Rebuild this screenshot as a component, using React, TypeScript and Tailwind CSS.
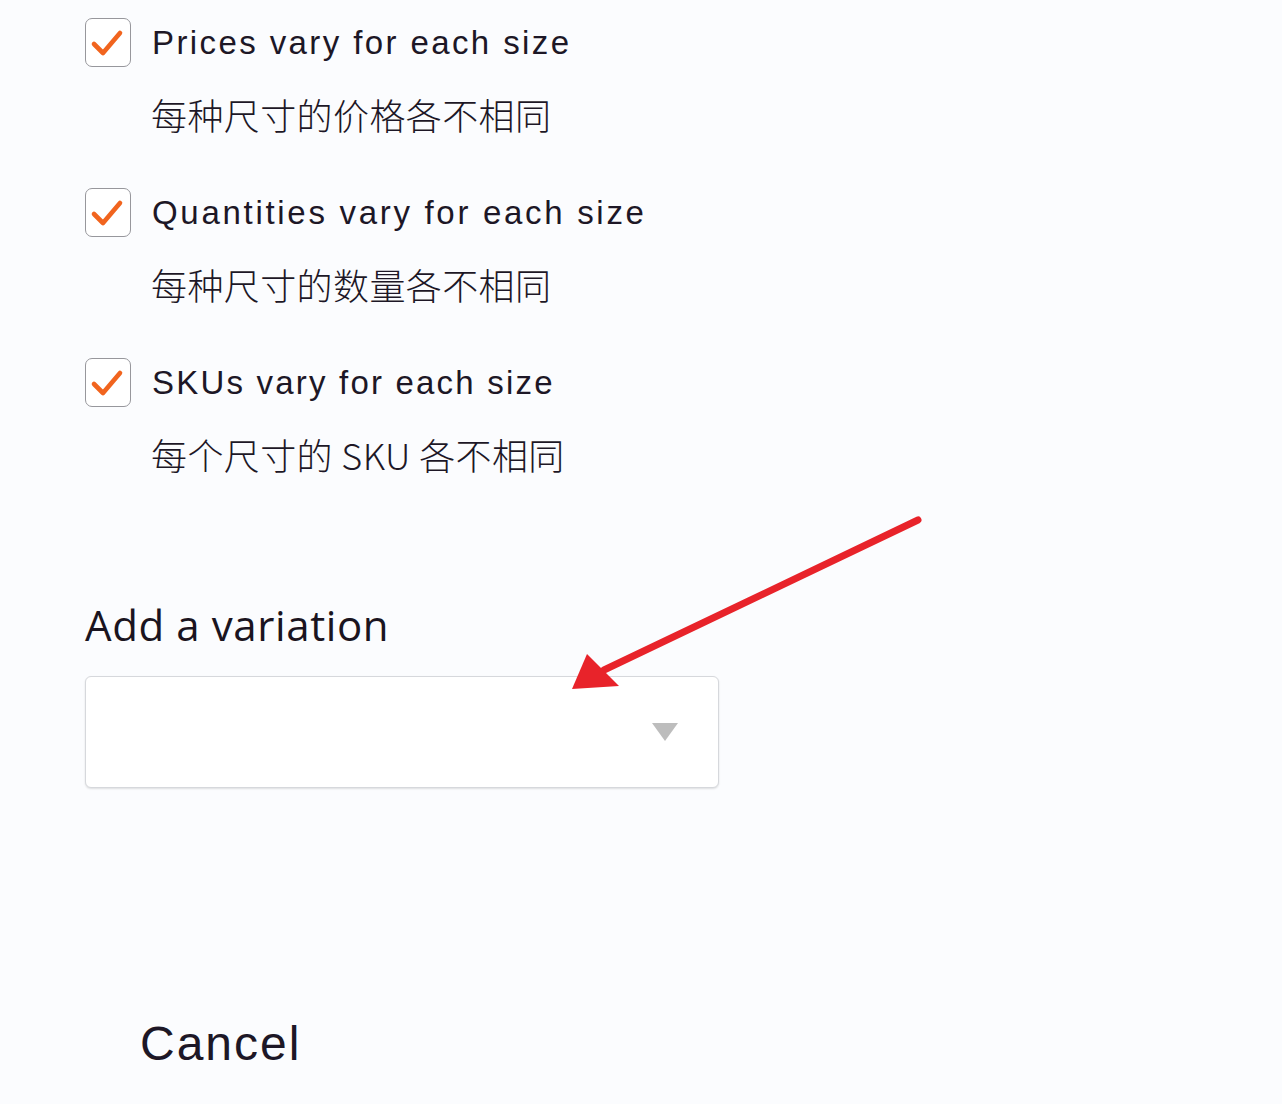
import React from "react";

const latin = { fontFamily: '"Liberation Sans", Arial, sans-serif' };
const cjk = { fontFamily: '"Noto Sans CJK SC", "Noto Sans", sans-serif' };

function Check() {
  return (
    <div className="w-[46px] h-[49px] shrink-0 rounded-[7px] border border-[#97979c] bg-white">
      <svg width="44" height="47" viewBox="0 0 44 47" fill="none" className="block">
        <path d="M8 25 L17 34 L34 14" stroke="#f1641e" strokeWidth="4.6" strokeLinecap="round" strokeLinejoin="round" />
      </svg>
    </div>
  );
}

function Group({ label, zh, track }: { label: string; zh: string; track: string }) {
  return (
    <div className="flex flex-col">
      <div className="flex items-center gap-[21px]">
        <Check />
        <span className={`text-[33px] text-[#1d1726] leading-none ${track}`} style={latin}>
          {label}
        </span>
      </div>
      <div className="pl-[66px] mt-[29px] text-[36px] tracking-[0.4px] text-[#1d1726] font-light leading-none" style={cjk}>
        {zh}
      </div>
    </div>
  );
}

export default function App() {
  return (
    <div className="relative w-full min-h-[1104px] bg-[#fbfcfe] overflow-hidden">
      <div className="flex flex-col pl-[85px] pt-[18px]">
        <div className="flex flex-col gap-[56px]">
          <Group label="Prices vary for each size" zh="每种尺寸的价格各不相同" track="tracking-[2.4px]" />
          <Group label="Quantities vary for each size" zh="每种尺寸的数量各不相同" track="tracking-[2.7px]" />
          <Group label="SKUs vary for each size" zh="每个尺寸的 SKU 各不相同" track="tracking-[2.2px]" />
        </div>
        <div
          className="mt-[132px] text-[42px] font-medium text-[#1a1420] leading-none tracking-[0.6px]"
          style={{ fontFamily: '"Open Sans", "Noto Sans", sans-serif' }}
        >
          Add a variation
        </div>
        <div className="mt-[30px] w-[634px] h-[112px] rounded-[6px] border border-[#d6d8dc] bg-white shadow-[0_1px_2px_rgba(0,0,0,0.12)] flex items-center justify-end pr-[40px]">
          <svg width="26" height="18" viewBox="0 0 26 18">
            <polygon points="0,0 26,0 13,18" fill="#bdbdbd" />
          </svg>
        </div>
        <div className="mt-[232px] pl-[55px] text-[48px] font-medium text-[#1d1726] leading-none tracking-[2px]" style={latin}>
          Cancel
        </div>
      </div>
      <svg className="absolute left-0 top-0 pointer-events-none" width="1282" height="1104">
        <line x1="918" y1="520" x2="604" y2="670" stroke="#e8232a" strokeWidth="7" strokeLinecap="round" />
        <polygon points="572,689 587,654 619,686" fill="#e8232a" />
      </svg>
    </div>
  );
}
